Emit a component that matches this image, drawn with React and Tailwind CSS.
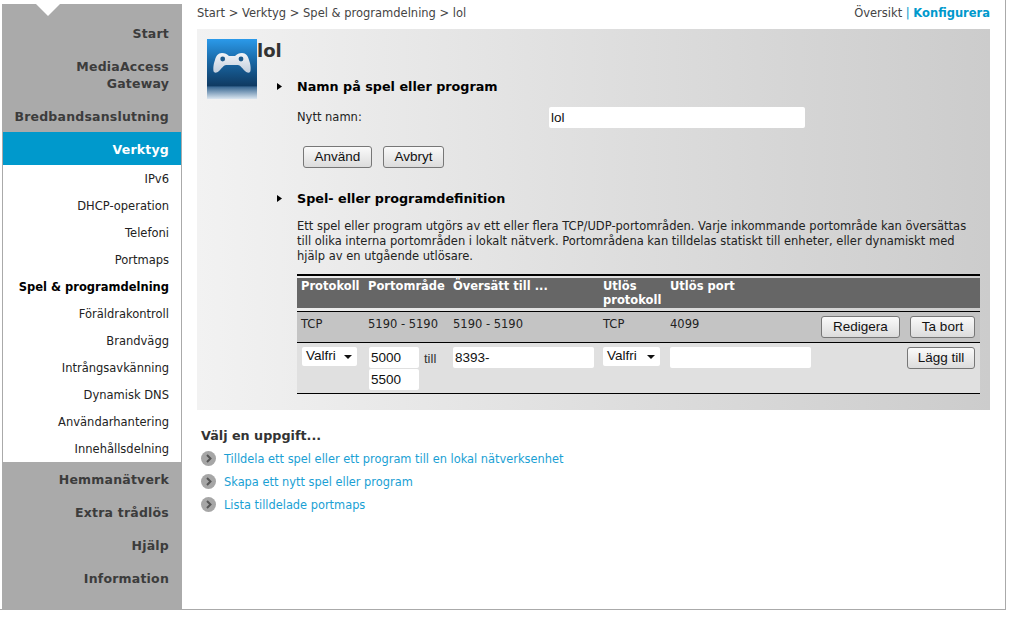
const V = '[font-family:"DejaVu_Sans",Verdana,sans-serif]';
const subs = ["IPv6", "DHCP-operation", "Telefoni", "Portmaps", "Spel & programdelning", "Föräldrakontroll", "Brandvägg", "Intrångsavkänning", "Dynamisk DNS", "Användarhantering", "Innehållsdelning"];
const bottom = ["Hemmanätverk", "Extra trådlös", "Hjälp", "Information"];

function Main({ children, h = "h-[33px]" }) {
  return <div className={`${h} flex items-center justify-end text-right pr-[13px] pl-[10px] text-[12.5px] leading-[17px] font-bold tracking-[0.2px] text-[#3c3c3c]`}>{children}</div>;
}

function Btn({ children, className = "" }) {
  return <button className={`h-[22px] border border-[#777] rounded-[3px] bg-gradient-to-b from-[#fafafa] to-[#dcdcdc] text-[13.5px] text-[#111] font-['Liberation_Sans',Arial,sans-serif] ${className}`}>{children}</button>;
}

function Field({ className = "", value = "" }) {
  return <input readOnly value={value} className={`h-[21px] bg-white rounded-[2px] px-[2px] text-[13.5px] text-[#111] font-['Liberation_Sans',Arial,sans-serif] outline-none ${className}`} />;
}

function Sel({ className = "w-[55px]" }) {
  return (
    <div className={`${className} h-[19px] bg-white rounded-[2px] flex items-center justify-between pl-[4px] pr-[5px] text-[13.5px] text-[#111] font-['Liberation_Sans',Arial,sans-serif]`}>
      Valfri
      <svg width="8" height="4" viewBox="0 0 8 4"><path d="M0 0h8L4 4z" fill="#111" /></svg>
    </div>
  );
}

function Arrow() {
  return <svg width="7" height="7" viewBox="0 0 7 7" className="shrink-0"><path d="M1 0l5 3.5L1 7z" fill="#000" /></svg>;
}

function Bullet() {
  return (
    <svg width="15" height="15" viewBox="0 0 15 15" className="shrink-0">
      <circle cx="7.5" cy="7.5" r="7.5" fill="#a6a6a6" />
      <path d="M6 4l3.5 3.5L6 11" fill="none" stroke="#555" strokeWidth="2" />
    </svg>
  );
}

function GameIcon() {
  return (
    <div className="w-[50px] h-[60px] shrink-0 bg-[linear-gradient(to_bottom,#2b9aea_0%,#1a6aa8_35%,#0f3a62_78%,#3c6a94_80%,#dbe6f0_100%)]">
      <svg width="50" height="60" viewBox="0 0 50 60">
        <defs>
          <linearGradient id="pad" x1="0" y1="0" x2="0" y2="1">
            <stop offset="0" stopColor="#f2f4f7" />
            <stop offset="1" stopColor="#c3cfdd" />
          </linearGradient>
        </defs>
        <path d="M15 14c3 0 5 1 7 3h6c2-2 4-3 7-3 4 0 6 3 7 7 2 5 2 11 1 12-1 1-3 1-5-1-3-3-5-6-7-6H19c-2 0-4 3-7 6-2 2-4 2-5 1-1-1-1-7 1-12 1-4 3-7 7-7z" fill="url(#pad)" />
        <circle cx="15.7" cy="20" r="2.4" fill="#1d5a8c" />
        <circle cx="34" cy="20" r="2.4" fill="#1d5a8c" />
      </svg>
    </div>
  );
}

const cols = "grid grid-cols-[71px_85px_146px_67px_1fr]";

export default function App() {
  return (
    <div className={`w-[1006px] h-[610px] flex bg-white border-r border-b border-[#aaa] text-[11.5px] text-[#333] ${V}`}>
      <aside className="w-[180px] ml-[2px] mt-[4px] bg-[#aaaaaa] shrink-0 relative pt-[13px]">
        <div className="absolute left-[34px] top-0 w-0 h-0 border-l-[12px] border-r-[12px] border-t-[12px] border-l-transparent border-r-transparent border-t-white" />
        <Main>Start</Main>
        <Main h="h-[49px]">
          <span>MediaAccess<br />Gateway</span>
        </Main>
        <Main h="h-[33px] pt-[2px]">Bredbandsanslutning</Main>
        <div className="h-[33px] pt-[3px] mx-[1px] bg-[#0099cc] flex items-center justify-end pr-[12px] text-[12.5px] font-bold tracking-[0.2px] text-white">Verktyg</div>
        <div className="mx-[1px] h-[297px] bg-white flex flex-col">
          {subs.map((s) => (
            <div key={s} className={`h-[27px] pt-[3px] flex items-center justify-end pr-[12px] ${s.startsWith("Spel") ? "font-bold text-black" : "text-[#222]"}`}>{s}</div>
          ))}
        </div>
        {bottom.map((b) => <Main key={b} h="h-[33px] pt-[2px]">{b}</Main>)}
      </aside>

      <main className="flex-1 pl-[15px] pr-[15px]">
        <div className="h-[25px] pt-[2px] flex items-center justify-between text-[#444]">
          <span>Start &gt; Verktyg &gt; Spel &amp; programdelning &gt; lol</span>
          <span>Översikt <span className="text-[#0099cc]">|</span> <b className="text-[#0099cc]">Konfigurera</b></span>
        </div>

        <section className="mt-[4px] h-[381px] bg-gradient-to-r from-[#f2f2f2] to-[#cccccc] flex pl-[10px] pt-[10px]">
          <GameIcon />
          <div className="flex-1 min-w-0">
            <h1 className="text-[18px] leading-[24px] font-bold text-[#333]">lol</h1>
            <div className="flex items-center gap-[14px] ml-[19px] mt-[15px] h-[17px]">
              <Arrow />
              <h2 className="text-[12.75px] font-bold text-black">Namn på spel eller program</h2>
            </div>
            <div className="ml-[40px] mt-[12px] h-[21px] flex items-center">
              <span className="w-[252px] text-[#222]">Nytt namn:</span>
              <Field className="w-[256px]" value="lol" />
            </div>
            <div className="ml-[46px] mt-[18px] flex gap-[11px]">
              <Btn className="w-[69px]">Använd</Btn>
              <Btn className="w-[61px]">Avbryt</Btn>
            </div>
            <div className="flex items-center gap-[14px] ml-[19px] mt-[22px] h-[17px]">
              <Arrow />
              <h2 className="text-[12.75px] font-bold text-black">Spel- eller programdefinition</h2>
            </div>
            <div className="ml-[40px] mr-[10px]">
              <p className="mt-[12px] h-[55px] leading-[15px] text-[#222]">Ett spel eller program utgörs av ett eller flera TCP/UDP-portområden. Varje inkommande portområde kan översättas till olika interna portområden i lokalt nätverk. Portområdena kan tilldelas statiskt till enheter, eller dynamiskt med hjälp av en utgående utlösare.</p>
              <div className="border-t-2 border-black pt-[2px] border-b border-b-black">
                <div className={`${cols} h-[30px] bg-[#666666] text-white font-bold leading-[14px] pt-[1px] pl-[4px]`}>
                  <span>Protokoll</span>
                  <span className="-ml-[4px]">Portområde</span>
                  <span className="-ml-[4px]">Översätt till ...</span>
                  <span>Utlös protokoll</span>
                  <span>Utlös port</span>
                </div>
                <div className="h-[3px]" />
              </div>
              <div className="h-[31px] bg-[#c4c4c4] border-b-1 border-black pl-[4px] text-[#222] flex items-start relative">
                <div className={`${cols} flex-1 pt-[4px]`}>
                  <span>TCP</span>
                  <span className="-ml-[4px]">5190 - 5190</span>
                  <span className="-ml-[4px]">5190 - 5190</span>
                  <span>TCP</span>
                  <span>4099</span>
                </div>
                <div className="absolute right-[5px] top-[4px] flex gap-[10px]">
                  <Btn className="w-[79px]">Redigera</Btn>
                  <Btn className="w-[65px]">Ta bort</Btn>
                </div>
              </div>
              <div className="h-[51px] bg-[#e0e0e0] border-b-1 border-black flex relative">
                <div className="ml-[5px] mt-[4px]"><Sel /></div>
                <div className="ml-[12px] mt-[4px] w-[50px] flex flex-col gap-[1px]">
                  <Field className="w-[50px]" value="5000" />
                  <Field className="w-[50px]" value="5500" />
                </div>
                <span className="ml-[5px] mt-[6px] w-[29px] font-['Liberation_Sans',Arial,sans-serif] text-[13px]">till</span>
                <div className="mt-[4px]"><Field className="w-[141px]" value="8393-" /></div>
                <div className="ml-[9px] mt-[4px]"><Sel className="w-[57px]" /></div>
                <div className="ml-[10px] mt-[4px]"><Field className="w-[141px]" /></div>
                <div className="absolute right-[5px] top-[4px]"><Btn className="w-[68px]">Lägg till</Btn></div>
              </div>
            </div>
          </div>
        </section>

        <h3 className="mt-[18px] ml-[4px] text-[12.75px] leading-[16px] font-bold text-[#333]">Välj en uppgift...</h3>
        <ul className="ml-[4px] mt-[7px] flex flex-col gap-[8px] text-[11.4px] text-[#1a9fd4]">
          {["Tilldela ett spel eller ett program till en lokal nätverksenhet", "Skapa ett nytt spel eller program", "Lista tilldelade portmaps"].map((t) => (
            <li key={t} className="flex items-center gap-[8px] h-[15px]"><Bullet /><span className="pt-[2px]">{t}</span></li>
          ))}
        </ul>
      </main>
    </div>
  );
}
